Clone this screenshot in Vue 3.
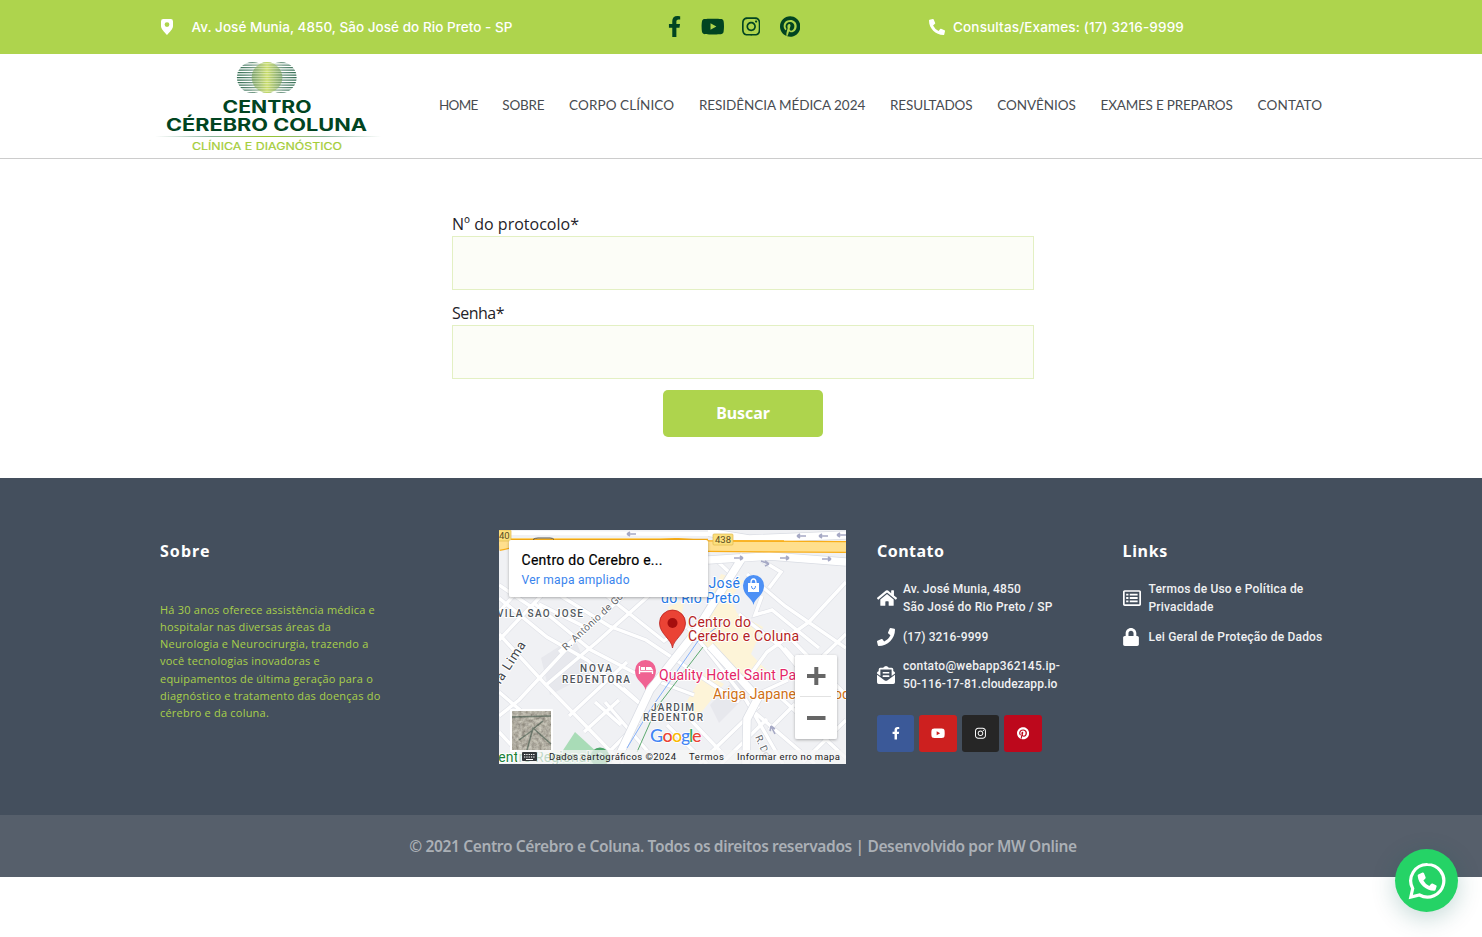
<script setup>
const icons = {
  facebook: { w: 320, d: 'M279.14 288l14.22-92.66h-88.91v-60.13c0-25.35 12.42-50.06 52.24-50.06h40.42V6.26S260.43 0 225.36 0c-73.22 0-121.08 44.38-121.08 124.72v70.62H22.89V288h81.39v224h100.17V288z' },
  youtube: { w: 576, d: 'M549.655 124.083c-6.281-23.65-24.787-42.276-48.284-48.597C458.781 64 288 64 288 64S117.22 64 74.629 75.486c-23.497 6.322-42.003 24.947-48.284 48.597-11.412 42.867-11.412 132.305-11.412 132.305s0 89.438 11.412 132.305c6.281 23.65 24.787 41.5 48.284 47.821C117.22 448 288 448 288 448s170.78 0 213.371-11.486c23.497-6.321 42.003-24.171 48.284-47.821 11.412-42.867 11.412-132.305 11.412-132.305s0-89.438-11.412-132.305zm-317.51 213.508V175.185l142.739 81.205-142.739 81.201z' },
  instagram: { w: 448, d: 'M224.1 141c-63.6 0-114.9 51.3-114.9 114.9s51.3 114.9 114.9 114.9S339 319.5 339 255.9 287.7 141 224.1 141zm0 189.6c-41.1 0-74.7-33.5-74.7-74.7s33.5-74.7 74.7-74.7 74.7 33.5 74.7 74.7-33.6 74.7-74.7 74.7zm146.4-194.3c0 14.9-12 26.8-26.8 26.8-14.9 0-26.8-12-26.8-26.8s12-26.8 26.8-26.8 26.8 12 26.8 26.8zm76.1 27.2c-1.7-35.9-9.9-67.7-36.2-93.9-26.2-26.2-58-34.4-93.9-36.2-37-2.1-147.9-2.1-184.9 0-35.8 1.7-67.6 9.9-93.9 36.1s-34.4 58-36.2 93.9c-2.1 37-2.1 147.9 0 184.9 1.7 35.9 9.9 67.7 36.2 93.9s58 34.4 93.9 36.2c37 2.1 147.9 2.1 184.9 0 35.9-1.7 67.7-9.9 93.9-36.2 26.2-26.2 34.4-58 36.2-93.9 2.1-37 2.1-147.8 0-184.8zM398.8 388c-7.8 19.6-22.9 34.7-42.6 42.6-29.5 11.7-99.5 9-132.1 9s-102.7 2.6-132.1-9c-19.6-7.8-34.7-22.9-42.6-42.6-11.7-29.5-9-99.5-9-132.1s-2.6-102.7 9-132.1c7.8-19.6 22.9-34.7 42.6-42.6 29.5-11.7 99.5-9 132.1-9s102.7-2.6 132.1 9c19.6 7.8 34.7 22.9 42.6 42.6 11.7 29.5 9 99.5 9 132.1s2.7 102.7-9 132.1z' },
  pinterest: { w: 496, d: 'M496 256c0 137-111 248-248 248-25.6 0-50.2-3.9-73.4-11.1 10.1-16.5 25.2-43.5 30.8-65 3-11.6 15.4-59 15.4-59 8.1 15.4 31.7 28.5 56.8 28.5 74.8 0 128.7-68.8 128.7-154.3 0-81.9-66.9-143.2-152.9-143.2-107 0-163.9 71.8-163.9 150.1 0 36.4 19.4 81.7 50.3 96.1 4.7 2.2 7.2 1.2 8.3-3.3.8-3.4 5-20.3 6.9-28.1.6-2.5.3-4.7-1.7-7.1-10.1-12.5-18.3-35.3-18.3-56.6 0-54.7 41.4-107.6 112-107.6 60.9 0 103.6 41.5 103.6 100.9 0 67.1-33.9 113.6-78 113.6-24.3 0-42.6-20.1-36.7-44.8 7-29.5 20.5-61.3 20.5-82.6 0-19-10.2-34.9-31.4-34.9-24.9 0-44.9 25.7-44.9 60.2 0 22 7.4 36.8 7.4 36.8s-24.5 103.8-29 123.2c-5 21.4-3 51.6-.9 71.2C65.4 450.9 0 361.1 0 256 0 119 111 8 248 8s248 111 248 248z' },
  phone: { w: 512, d: 'M493.4 24.6l-104-24c-11.3-2.6-22.9 3.3-27.5 13.9l-48 112c-4.2 9.8-1.4 21.3 6.9 28l60.6 49.6c-36 76.7-98.9 140.5-177.2 177.2l-49.6-60.6c-6.8-8.3-18.2-11.1-28-6.9l-112 48C3.9 366.5-2 378.1.6 389.4l24 104C27.1 504.2 36.7 512 48 512c256.1 0 464-207.5 464-464 0-11.2-7.7-20.9-18.6-23.4z' },
  phoneAlt: { w: 512, d: 'M497.39 361.8l-112-48a24 24 0 0 0-28 6.9l-49.6 60.6A370.66 370.66 0 0 1 130.6 204.11l60.6-49.6a23.94 23.94 0 0 0 6.9-28l-48-112A24.16 24.16 0 0 0 122.6.61l-104 24A24 24 0 0 0 0 48c0 256.5 207.9 464 464 464a24 24 0 0 0 23.4-18.6l24-104a24.29 24.29 0 0 0-14.01-27.6z' },
  home: { w: 576, d: 'M280.37 148.26L96 300.11V464a16 16 0 0 0 16 16l112.06-.29a16 16 0 0 0 15.92-16V368a16 16 0 0 1 16-16h64a16 16 0 0 1 16 16v95.64a16 16 0 0 0 16 16.05L464 480a16 16 0 0 0 16-16V300L295.67 148.26a12.19 12.19 0 0 0-15.3 0zM571.6 251.47L488 182.56V44.05a12 12 0 0 0-12-12h-56a12 12 0 0 0-12 12v72.61L318.47 43a48 48 0 0 0-61 0L4.34 251.47a12 12 0 0 0-1.6 16.9l25.5 31A12 12 0 0 0 45.15 301l235.22-193.74a12.19 12.19 0 0 1 15.3 0L530.9 301a12 12 0 0 0 16.9-1.6l25.5-31a12 12 0 0 0-1.7-16.93z' },
  mail: { w: 512, d: 'M176 216h160a16 16 0 0 0 16-16v-16a16 16 0 0 0-16-16H176a16 16 0 0 0-16 16v16a16 16 0 0 0 16 16zm-16 80a16 16 0 0 0 16 16h160a16 16 0 0 0 16-16v-16a16 16 0 0 0-16-16H176a16 16 0 0 0-16 16zM256 417c-16 0-33-5-46-15L0 251v213a48 48 0 0 0 48 48h416a48 48 0 0 0 48-48V251L302 402c-13 10-30 15-46 15zM494 164c-9-7-17-14-30-24V96a48 48 0 0 0-48-48h-78l-9-7C312 29 279 0 256 0s-56 29-73 41l-9 7H96a48 48 0 0 0-48 48v44c-13 10-21 17-30 24A48 48 0 0 0 0 201v10l96 70V96h320v185l96-70v-10a48 48 0 0 0-18-37z' },
  list: { w: 512, d: 'M464 32H48C21.49 32 0 53.49 0 80v352c0 26.51 21.49 48 48 48h416c26.51 0 48-21.49 48-48V80c0-26.51-21.49-48-48-48zM464 432H48V80h416zM192 132h224v56H192zM192 228h224v56H192zM192 324h224v56H192zM90 132h64v56H90zM90 228h64v56H90zM90 324h64v56H90z' },
  lock: { w: 448, d: 'M400 224h-24v-72C376 68.2 307.8 0 224 0S72 68.2 72 152v72H48c-26.5 0-48 21.5-48 48v192c0 26.5 21.5 48 48 48h352c26.5 0 48-21.5 48-48V272c0-26.5-21.5-48-48-48zm-104 0H152v-72c0-39.7 32.3-72 72-72s72 32.3 72 72v72z' },
}
const social = ['facebook', 'youtube', 'instagram', 'pinterest']
const nav = [
  ['HOME', 38.5], ['SOBRE', 42], ['CORPO CLÍNICO', 105], ['RESIDÊNCIA MÉDICA 2024', 166.3],
  ['RESULTADOS', 82.5], ['CONVÊNIOS', 78.5], ['EXAMES E PREPAROS', 132], ['CONTATO', 65],
]
const about = [
  ['Há 30 anos oferece assistência médica e', 215], ['hospitalar nas diversas áreas da', 171],
  ['Neurologia e Neurocirurgia, trazendo a', 208.5], ['você tecnologias inovadoras e', 160],
  ['equipamentos de última geração para o', 213], ['diagnóstico e tratamento das doenças do', 220.5],
  ['cérebro e da coluna.', 109],
]
const contact = [
  { icon: 'home', lines: [['Av. José Munia, 4850', 118], ['São José do Rio Preto / SP', 149.5]] },
  { icon: 'phone', lines: [['(17) 3216-9999', 85.5]] },
  { icon: 'mail', lines: [['contato@webapp362145.ip-', 157], ['50-116-17-81.cloudezapp.io', 154.5]] },
]
const links = [
  { icon: 'list', lines: [['Termos de Uso e Política de', 155], ['Privacidade', 65]] },
  { icon: 'lock', lines: [['Lei Geral de Proteção de Dados', 174]] },
]
// Tracks a line of text so that it spans the given width.
const vFit = {
  mounted(el, { value }) {
    const width = el.getBoundingClientRect().width
    el.style.letterSpacing = `${(value - width) / el.textContent.length}px`
  },
}
const stripes = Array.from({ length: 13 }, (_, i) => 1 + i * 2.5)
</script>

<template>
  <div class="page">
    <div class="topbar">
      <div class="address">
        <svg class="pin" viewBox="0 0 12 16"><path fill-rule="evenodd" d="M2.200 0h7.600Q12 0 12 2.400V7c0 3-3.500 6-6 9C3.500 13 0 10 0 7V2.400Q0 0 2.200 0zM6 3.200a2.400 2.400 0 1 0 0 4.800 2.400 2.400 0 0 0 0-4.800z" /></svg>
        <span v-fit="321">Av. José Munia, 4850, São José do Rio Preto - SP</span>
      </div>
      <div class="top-social">
        <a v-for="s in social" :key="s"><svg :viewBox="`0 0 ${icons[s].w} 512`"><path :d="icons[s].d" /></svg></a>
      </div>
      <div class="phone">
        <svg viewBox="0 0 512 512"><path :d="icons.phoneAlt.d" /></svg>
        <span v-fit="231">Consultas/Exames: (17) 3216-9999</span>
      </div>
    </div>

    <header class="header">
      <svg class="logo" viewBox="0 0 230 96">
        <defs>
          <linearGradient id="side" gradientUnits="userSpaceOnUse" x1="82" x2="142"><stop offset="0" stop-color="#2f6b50" /><stop offset=".35" stop-color="#8aa99a" /><stop offset=".5" stop-color="#b5d252" /><stop offset=".65" stop-color="#8aa99a" /><stop offset="1" stop-color="#2f6b50" /></linearGradient>
          <linearGradient id="core" x1="0" x2="1"><stop offset="0" stop-color="#6f9a5e" /><stop offset=".5" stop-color="#cfe06e" /><stop offset="1" stop-color="#6f9a5e" /></linearGradient>
          <linearGradient id="rule" x1="0" x2="1"><stop offset="0" stop-color="#fff" /><stop offset=".25" stop-color="#8bb39c" /><stop offset=".5" stop-color="#95c52c" /><stop offset=".75" stop-color="#8bb39c" /><stop offset="1" stop-color="#fff" /></linearGradient>
          <clipPath id="globes"><circle cx="97.500" cy="19.500" r="15.600" /><circle cx="126" cy="19.500" r="15.600" /><circle cx="112" cy="19.500" r="15.600" /></clipPath>
        </defs>
        <g clip-path="url(#globes)">
          <rect v-for="y in stripes" :key="y" x="81" :y="y + 3" width="61" height="1.25" fill="url(#side)" />
        </g>
        <circle cx="112" cy="19.500" r="15.300" fill="url(#core)" opacity=".75" />
        <g clip-path="url(#globes)"><rect v-for="y in stripes" :key="y" x="97" :y="y + 4.300" width="30" height=".7" fill="#eff5d8" opacity=".55" /></g>
        <g class="brand">
          <text x="67.500" y="54.500" textLength="89" lengthAdjust="spacingAndGlyphs">CENTRO</text>
          <text x="11" y="73" textLength="201" lengthAdjust="spacingAndGlyphs">CÉREBRO COLUNA</text>
        </g>
        <rect x="0" y="78" width="226" height="1" fill="url(#rule)" />
        <text class="tagline" x="37" y="91.500" textLength="150" lengthAdjust="spacingAndGlyphs">CLÍNICA E DIAGNÓSTICO</text>
      </svg>
      <nav class="nav"><a v-for="[label, width] in nav" :key="label" v-fit="width">{{ label }}</a></nav>
    </header>

    <main class="main">
      <form class="form" @submit.prevent>
        <label for="protocol"><span v-fit="127">Nº do protocolo*</span></label>
        <input id="protocol" type="text" />
        <label for="password"><span v-fit="52">Senha*</span></label>
        <input id="password" type="password" />
        <button><span v-fit="53.5">Buscar</span></button>
      </form>
    </main>

    <footer class="footer">
      <section class="about">
        <h2><span v-fit="50.5">Sobre</span></h2>
        <p><span v-for="[line, width] in about" :key="line" v-fit="width">{{ line }}</span></p>
      </section>

      <svg class="map" viewBox="0 0 347 234">
        <defs>
          <filter id="shade" x="-10%" y="-10%" width="120%" height="130%"><feDropShadow dx="0" dy="1" stdDeviation="1.5" flood-opacity=".3" /></filter>
          <filter id="terrain" x="0" y="0" width="100%" height="100%"><feTurbulence type="fractalNoise" baseFrequency=".3" numOctaves="3" seed="4" /><feColorMatrix values=".5 .2 0 0 .09 .5 .2 0 0 .07 .45 .15 0 0 .06 0 0 0 0 1" /></filter>
          <g id="streets" fill="none">
            <path d="M0 55L40 82M0 82L40 37M0 110L84 22M0 68L48 107L88 130L146 178M0 104L47 155L124 234M36 74L92 120L134 142L195 165M62 66L110 96L147 110L240 172M108 66L165 111L188 96M0 162L47 202M0 186L20 170L74 112L142 50M60 122L88 98L40 74M47 155L98 112L165 52M70 186L128 132M85 202L120 170M106 172L158 232M124 158L144 176M0 202L30 234M104 228L140 192M96 172L122 195M168 195L208 234M184 182L226 226M200 234L260 176M222 234L268 189" />
            <path d="M215 28L232 44L214 68L195 104M262 30L282 42L270 58M248 44L286 76L347 118M263 66L256 85L273 80L320 118M347 52L310 92L268 122L246 152M283 100L347 165M320 130L347 104M284 234L247 170L207 119L189 98M240 84L282 117L306 146M285 118L297 131L302 126M250 168L289 150M253 180L316 234M280 166L347 228M270 200L296 174M304 232L347 190" />
          </g>
          <clipPath id="belowCard"><rect y="67" width="347" height="167" /><rect x="209.500" width="138" height="68" /></clipPath>
        </defs>
        <rect width="347" height="234" fill="#f0f1f4" />
        <path d="M222 44L245 51L231 68L238 83L264 97L252 124L270 143L245 148L222 133L198 107L205 83z M205 143L225 154L193 194L180 184z M169 77L185 70L180 108z" fill="#fdf4d8" />
        <path d="M42 128L75 107L91 144L51 165z M211 175L240 145L247 166L220 193z" fill="#e7e8ed" />
        <path d="M76 202L100 224V234H55z" fill="#a9dcb7" />
        <use href="#streets" stroke="#dfe1e7" stroke-width="4.600" /><use href="#streets" stroke="#fff" stroke-width="3.400" />
        <path d="M116 234L151 160L195 104L245 25M247 234L248 189L259 168L211 116M209 30L270 26L347 32M195 0L250 9L347 5" fill="none" stroke="#d9dce3" stroke-width="9" />
        <path d="M116 234L151 160L195 104L245 25M247 234L248 189L259 168L211 116M209 30L270 26L347 32M195 0L250 9L347 5" fill="none" stroke="#fff" stroke-width="7.600" />
        <path d="M128 218L151 180L199 111L225 92" fill="none" stroke="#84b0fa" stroke-width="1" /><path d="M138 222L158 177L204 117" fill="none" stroke="#5eaa70" stroke-width="1" />
        <path d="M0 15Q8 14 18 10L105 9L209 16L347 17" fill="none" stroke="#f9ae18" stroke-width="12" /><path d="M0 15Q8 14 18 10L105 9L209 16L347 17" fill="none" stroke="#ffdf8d" stroke-width="9.500" />
        <path d="M12 0H209V8H12z" fill="#f0f1f4" /><path d="M12 3L209 4" stroke="#fff" stroke-width="4" /><path d="M12 9.500H209M225 11h60" fill="none" stroke="#f9ae18" stroke-width="1.500" /><path d="M34 9.500q2-1.500 5-1.500h12q3 0 4 1.500" fill="none" stroke="#555" />
        <g fill="none" stroke="#a6a9c5" stroke-width="1.600"><path d="M128 4h9m-9 0l3-2m-3 2l3 2M298 6h9m-9 0l3-2m-3 2l3 2M320 6h9m-9 0l3-2m-3 2l3 2M338 5h9m-9 0l3-2m-3 2l3 2M235 28h9m0 0l-3-2m3 2l-3 2M281 28h9m0 0l-3-2m3 2l-3 2M323 29h9m0 0l-3-2m3 2l-3 2M262 31l8 3m0 0l-4-3m4 3l-4 2M276 204l-4-8m0 0l-1 5m1-5l4 3" /></g>
        <g class="shield"><rect x="-7" y="0" width="19" height="11" rx="1" /><text x="0" y="9">40</text><rect x="214" y="4" width="20" height="11" rx="1" /><text x="216" y="13" textLength="16">438</text></g>

        <g class="labels">
          <g class="district"><text x="-2" y="87" textLength="86">VILA SAO JOSE</text><text x="81" y="142" textLength="32">NOVA</text><text x="63" y="153" textLength="68">REDENTORA</text><text x="152" y="181" textLength="43">JARDIM</text><text x="144" y="191" textLength="60">REDENTOR</text></g>
          <g class="street"><text transform="translate(67 121) rotate(-43)" textLength="79">R. Antônio de Go</text><text class="big" transform="translate(-6 166) rotate(-57)" textLength="61">aria Lima</text><text transform="translate(256 207) rotate(66)">R. Do</text></g>
          <g class="place" clip-path="url(#belowCard)">
            <g fill="#2678e6"><text x="209.500" y="58" textLength="31.500">José</text><text x="162" y="73" textLength="79">do Rio Preto</text></g>
            <g fill="#b51f25"><text x="189" y="97" textLength="63">Centro do</text><text x="189" y="111" textLength="111">Cerebro e Coluna</text></g>
            <text x="160" y="150" fill="#e42668" textLength="137">Quality Hotel Saint Pa</text>
            <text x="214" y="169" fill="#cf7014" textLength="83">Ariga Japane</text><text x="335" y="169" fill="#cf7014">od</text>
          </g>
        </g>
        <path d="M173.500 118c-1-9-13-14-13-25a13 13 0 0 1 26 0c0 11-12 16-13 25z" fill="#ea4335" stroke="#b31412" stroke-width=".7" /><circle cx="173.500" cy="93" r="5" fill="#a50e0e" />
        <path d="M254.500 75c-1-7-10.500-9-10.500-19.500a10.500 10.500 0 0 1 21 0c0 10.500-9.500 12.500-10.500 19.500z" fill="#4d90f5" /><path d="M249 53h11v9h-11z" fill="#fff" /><path d="M252 53q0-4 2.500-4t2.500 4" stroke="#fff" stroke-width="1.3" fill="none" /><path d="M252.500 56q0 3 2 3t2-3" stroke="#4d90f5" fill="none" />
        <path d="M146.500 160c-1-7-10.500-9-10.500-19.500a10.500 10.500 0 0 1 21 0c0 10.500-9.500 12.500-10.500 19.500z" fill="#f06292" /><path d="M140.500 136v8M153.500 144v-3.500M140 141.500h14" stroke="#fff" stroke-width="1.3" /><path d="M142 137h4v3h-4zM147 137h5l2 3h-7z" fill="#fff" />
        <circle cx="101" cy="227" r="9.500" fill="#4da66b" /><circle cx="101" cy="226" r="3" fill="none" stroke="#d8efdf" />
        <g class="labels place"><text x="-10" y="232" fill="#188038" textLength="101">Centro Regional</text></g>

        <rect x="10" y="10" width="199" height="57" rx="2" fill="#fff" filter="url(#shade)" />
        <text class="card-title" x="22.500" y="35" textLength="141">Centro do Cerebro e...</text>
        <text class="card-link" x="22.500" y="54" textLength="108">Ver mapa ampliado</text>

        <rect x="11" y="179" width="43" height="43" rx="1" fill="#fff" /><rect x="13" y="181" width="39" height="39" filter="url(#terrain)" /><path d="M13 187L52 186M28 220L34 198L52 214M34 200L20 210M34 199L44 191" fill="none" stroke="#344d40" opacity=".55" stroke-width="1.500" />
        <rect x="18" y="220" width="329" height="14" fill="#f5f5f5" opacity=".75" />
        <g class="google"><text x="151" y="212" fill="#4285f4">G</text><text x="163.500" y="212" fill="#ea4335">o</text><text x="173" y="212" fill="#f9b904">o</text><text x="182" y="212" fill="#4285f4">g</text><text x="190" y="212" fill="#34a853">l</text><text x="193" y="212" fill="#ea4335">e</text></g>
        <rect x="23" y="222" width="15" height="9" rx="1" fill="#33373b" /><path d="M25 224.500h11M25 227h11" stroke="#fff" stroke-dasharray="1.300 1" /><path d="M27 229.500h7" stroke="#fff" />
        <g class="legal"><text x="50" y="230" textLength="127">Dados cartográficos ©2024</text><text x="190" y="230" textLength="35">Termos</text><text x="238" y="230" textLength="103">Informar erro no mapa</text></g>
        <rect x="296" y="125" width="42" height="84" rx="2" fill="#fff" filter="url(#shade)" /><path d="M301 166.500h31" stroke="#e2e2e2" /><path d="M308 146h18.500M317.300 137v18M308 188h18.500" stroke="#666" stroke-width="4" />
      </svg>

      <section class="contact">
        <h2><span v-fit="67.5">Contato</span></h2>
        <ul>
          <li v-for="item in contact" :key="item.icon"><svg :class="item.icon" :viewBox="`0 0 ${icons[item.icon].w} 512`"><path fill-rule="evenodd" :d="icons[item.icon].d" /></svg><div><span v-for="[line, width] in item.lines" :key="line" v-fit="width">{{ line }}</span></div></li>
        </ul>
        <div class="social"><a v-for="s in social" :key="s" :class="s"><svg :viewBox="`0 0 ${icons[s].w} 512`"><path :d="icons[s].d" /></svg></a></div>
      </section>

      <section class="links">
        <h2><span v-fit="45.5">Links</span></h2>
        <ul>
          <li v-for="item in links" :key="item.icon"><svg :class="item.icon" :viewBox="`0 0 ${icons[item.icon].w} 512`"><path fill-rule="evenodd" :d="icons[item.icon].d" /></svg><div><span v-for="[line, width] in item.lines" :key="line" v-fit="width">{{ line }}</span></div></li>
        </ul>
      </section>
    </footer>
    <div class="copyright"><span v-fit="667.5">© 2021 Centro Cérebro e Coluna. Todos os direitos reservados | Desenvolvido por MW Online</span></div>

    <a class="whatsapp">
      <svg viewBox="0 0 38 38">
        <path d="M19.500 2.500A16.300 16.300 0 1 1 11.500 33L2.800 35L4.700 26.500A16.300 16.300 0 0 1 19.500 2.500z" fill="none" stroke="#fff" stroke-width="3.200" />
        <path d="M10.300 12.600L14.500 10.500Q15.500 10.200 16 11.200L17.600 15.300Q17.900 16.200 17.200 16.800L15.400 18.500Q17.500 22.300 21.300 24.100L23 22Q23.600 21.300 24.500 21.600L28 23.200Q28.900 23.700 28.600 24.600L27.500 28Q27.200 28.800 26.200 28.800C17.500 28.500 10.500 22 9.700 14Q9.600 13 10.300 12.600z" fill="#fff" />
      </svg>
    </a>
  </div>
</template>

<style>
body { background: #fff; }
</style>

<style scoped>
.page { position: relative; width: 1482px; height: 937px; overflow: hidden; font-family: "Open Sans", "Liberation Sans", sans-serif; background: #fff; }
.page * { box-sizing: border-box; }
svg { display: block; flex: none; }
span, .nav a { white-space: nowrap; }
.topbar { display: flex; align-items: center; height: 54px; padding: 0 0 1px 161px; background: #aed44d; color: #fff; fill: currentColor; font: 500 13.500px/20px Inter, sans-serif; }
.address { display: flex; align-items: center; width: 494px; gap: 18.500px; }
.address .pin { width: 12px; height: 16px; }
.top-social { display: flex; width: 274px; color: #014421; }
.top-social a { display: flex; justify-content: center; width: 38.500px; }
.top-social svg { height: 21px; }
.phone { display: flex; align-items: center; gap: 8px; }
.phone svg { width: 16px; height: 16px; }
.header { display: flex; height: 105px; border-bottom: 1px solid #ccc; padding-left: 155px; }
.logo { width: 230px; height: 96px; margin-top: 4px; }
.brand { font: 700 17px Inter, sans-serif; fill: #014421; }
.tagline { font: 400 10.500px Inter, sans-serif; fill: #a5cd39; stroke: #a5cd39; stroke-width: .2px; }
.nav { display: flex; align-items: center; gap: 24.800px; height: 102px; margin-left: 54px; color: #484c51; font: 400 13.500px Lato, sans-serif; }
.main { height: 319px; padding-top: 54px; padding-left: 452px; }
.form { display: flex; flex-direction: column; width: 582px; }
.form label { height: 23px; color: #1f2329; font-size: 16px; line-height: 23px; }
.form input { height: 54px; margin-bottom: 12px; border: 1px solid #e3f0c3; background: #fcfdf7; outline: none; }
.form input:last-of-type { margin-bottom: 11px; }
.form button { align-self: center; width: 160px; height: 47px; padding: 0 0 2px; border: 0; border-radius: 5px; background: #aed44d; color: #fff; font: 700 16px "Noto Sans", sans-serif; }
.footer { display: flex; height: 337px; padding-left: 160px; background: #444f5d; color: #fff; }
.footer h2 { margin: 62px 0 0; height: 22px; color: #fff; font: 700 16px/22px "Noto Sans", sans-serif; }
.about { width: 339px; }
.about p { display: flex; flex-direction: column; align-items: flex-start; margin: 39px 0 0; color: #a9d04a; font-size: 11px; font-weight: 500; line-height: 17.150px; }
.map { width: 347px; height: 234px; margin-top: 52px; font-family: Roboto, sans-serif; }
.contact { width: 245.500px; margin-left: 31px; }
ul { display: flex; flex-direction: column; gap: 11.500px; margin: 18px 0 0; padding: 0; list-style: none; }
li { display: flex; align-items: center; font: 500 12px/18px Roboto, sans-serif; color: #f0f1f2; }
li svg { height: 18px; margin-right: 8px; fill: #fff; }
li svg.home { width: 20px; margin-right: 6px; }
li svg.lock { width: 16px; margin-right: 10px; }
li div { display: flex; flex-direction: column; align-items: flex-start; }
li svg.home, li svg.mail, li svg.list, li svg.phone, li svg.lock { background: none; }
.social { display: flex; gap: 5.200px; margin-top: 22px; }
.social a { display: grid; place-items: center; width: 37.300px; height: 37px; border-radius: 3px; fill: #fff; }
.social svg { height: 12.500px; }
.facebook { background: #3b5998; }
.youtube { background: #cd201f; }
.instagram { background: #262626; }
.pinterest { background: #bd081c; }
.copyright { display: flex; justify-content: center; height: 62px; padding-left: 4px; background: #565f6b; color: #abb0b6; font: 600 15.500px/62px "Noto Sans", sans-serif; }
.whatsapp { position: absolute; left: 1395px; top: 849px; display: grid; place-items: center; width: 63px; height: 63px; border-radius: 50%; background: #25d366; box-shadow: 0 6px 24px rgba(7, 94, 84, .24); }
.whatsapp svg { width: 38px; height: 38px; }
.shield rect { fill: #fbdf7d; stroke: #dfb84d; stroke-width: .7px; }
.shield text { font-size: 9.500px; fill: #594c23; }
.labels text, .labels.place text { paint-order: stroke; stroke: #fff; stroke-width: 2px; stroke-linejoin: round; }
.district { font-size: 10px; font-weight: 500; fill: #50565c; }
.street { font-size: 10px; fill: #5f6469; }
.street .big { font-size: 13px; fill: #42464b; }
.place { font-size: 14px; }
.card-title { font-size: 14px; font-weight: 400; fill: #000; stroke: #000; stroke-width: .2px; }
.card-link { font-size: 12px; fill: #3983ed; }
.google { font: 500 18px Lato, sans-serif; paint-order: stroke; stroke: #fff; stroke-width: 1.500px; }
.legal { font-size: 9.500px; fill: #222; }
</style>
